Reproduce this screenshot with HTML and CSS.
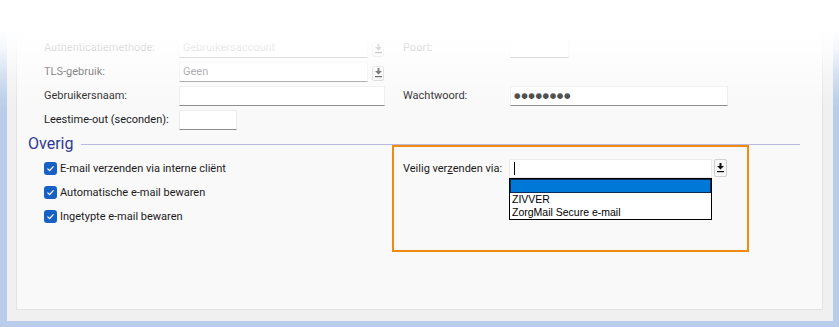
FILE: index.html
```html
<html lang="nl">
<head>
    <meta charset="UTF-8">
    <title>Instellingen e-mail</title>
    <link rel="stylesheet" href="styles.css">
</head>
<body>
    <div class="window">
        <div class="panel">
            <div class="fields">
                <label>Authenticatiemethode:</label>
                <div class="combo">
                    <span class="field dis wide">Gebruikersaccount</span>
                    <span class="drop"><svg width="7" height="10" viewBox="0 0 7 10"><rect x="2.5" y="0" width="2" height="3" fill="#111"/><polygon points="0,3 7,3 3.5,6.5" fill="#111"/><rect x="0" y="8" width="7" height="1.2" fill="#111"/></svg></span>
                </div>
                <span></span>
                <label>Poort:</label>
                <span class="field poort"></span>

                <label>TLS-gebruik:</label>
                <div class="combo">
                    <span class="field dis wide">Geen</span>
                    <span class="drop"><svg width="7" height="10" viewBox="0 0 7 10"><rect x="2.5" y="0" width="2" height="3" fill="#111"/><polygon points="0,3 7,3 3.5,6.5" fill="#111"/><rect x="0" y="8" width="7" height="1.2" fill="#111"/></svg></span>
                </div>
                <span></span>
                <span></span>
                <span></span>

                <label>Gebruikersnaam:</label>
                <span class="field"></span>
                <span></span>
                <label>Wachtwoord:</label>
                <span class="field dots">&#9679;&#9679;&#9679;&#9679;&#9679;&#9679;&#9679;&#9679;</span>

                <label>Leestime-out (seconden):</label>
                <span class="field small"></span>
            </div>

            <div class="legend">
                <span>Overig</span>
                <span class="rule"></span>
            </div>

            <div class="section">
                <div class="checks">
                    <div class="check"><span class="box"><svg width="9" height="9" viewBox="0 0 9 9"><path d="M1.5 4.6 L3.6 6.6 L7.5 2.4" stroke="#fff" stroke-width="1.3" fill="none"/></svg></span>E-mail verzenden via interne cliënt</div>
                    <div class="check"><span class="box"><svg width="9" height="9" viewBox="0 0 9 9"><path d="M1.5 4.6 L3.6 6.6 L7.5 2.4" stroke="#fff" stroke-width="1.3" fill="none"/></svg></span>Automatische e-mail bewaren</div>
                    <div class="check"><span class="box"><svg width="9" height="9" viewBox="0 0 9 9"><path d="M1.5 4.6 L3.6 6.6 L7.5 2.4" stroke="#fff" stroke-width="1.3" fill="none"/></svg></span>Ingetypte e-mail bewaren</div>
                </div>
                <div class="secure">
                    <div class="highlight"></div>
                    <label class="secure-label">Veilig ver<u>z</u>enden via:</label>
                    <div class="select">
                        <span class="input"><span class="caret"></span></span>
                        <span class="drop"><svg width="7" height="10" viewBox="0 0 7 10"><rect x="2.5" y="0" width="2" height="3" fill="#111"/><polygon points="0,3 7,3 3.5,6.5" fill="#111"/><rect x="0" y="8" width="7" height="1.2" fill="#111"/></svg></span>
                        <ul class="list">
                            <li class="sel"></li>
                            <li>ZIVVER</li>
                            <li>ZorgMail Secure e-mail</li>
                        </ul>
                    </div>
                </div>
            </div>
        </div>
    </div>
    <div class="fade"></div>
</body>
</html>
```

FILE: styles.css
```css
body { margin: 0; height: 327px; overflow: hidden; background: #b9cdea; font-family: Roboto, "Liberation Sans", sans-serif; font-size: 11px; color: #1b1b1b; position: relative; }
.window { margin: 0 6px 0 7px; height: 321px; box-sizing: border-box; padding: 0 10px 11px 9px; background: #f0f0f0; }
.panel { height: 100%; box-sizing: border-box; background: #f9f9f9; border: 1px solid #e3e3e3; padding: 37px 11px 0 11px; }

.fields { margin-left: 16px; display: grid; grid-template-columns: 135px 206px 18px 107px 218px; grid-auto-rows: 20px; row-gap: 4px; align-items: center; }
.fields label { line-height: 20px; white-space: nowrap; }
.field { display: block; height: 20px; box-sizing: border-box; background: #fff; border: 1px solid #ececec; border-bottom-color: #8c8c8c; padding-left: 3px; line-height: 18px; }
.field.dis { color: #6e6e6e; }
.field.wide { width: 189px; }
.field.poort { width: 59px; }
.field.small { width: 58px; }
.field.dots { color: #3c3c3c; font-family: "DejaVu Sans", sans-serif; font-size: 7.5px; letter-spacing: 0.6px; padding-left: 3px; }

.combo { display: flex; align-items: center; gap: 4px; }
.drop { width: 13px; height: 18px; box-sizing: border-box; border: 1px solid #d0d0d0; border-radius: 2px; background: #f7f7f7; display: flex; align-items: center; justify-content: center; }
.combo .drop { width: 12px; height: 15px; margin-top: 2px; }

.legend { display: flex; align-items: center; margin-top: 6px; height: 16px; }
.legend span:first-child { font-size: 16px; line-height: 16px; color: #2f3893; }
.rule { flex: 1; height: 1px; background: #b9b9df; margin: 0 11px 0 8px; }

.section { display: flex; margin-top: 6px; }
.checks { margin-left: 16px; width: 359px; display: flex; flex-direction: column; gap: 4px; }
.check { height: 20px; display: flex; align-items: center; gap: 3px; white-space: nowrap; }
.box { width: 13px; height: 13px; border-radius: 3px; background: #1761c4; display: flex; align-items: center; justify-content: center; }

.secure { position: relative; display: flex; align-items: center; height: 20px; }
.secure-label { width: 106px; white-space: nowrap; }
.highlight { position: absolute; left: -11px; top: -13px; width: 357px; height: 107px; box-sizing: border-box; border: 2px solid #f28b12; }
.select { position: relative; display: flex; align-items: center; gap: 2px; }
.input { width: 203px; height: 19px; box-sizing: border-box; background: #fff; border: 1px solid #ececec; display: flex; align-items: center; padding-left: 4px; }
.caret { width: 1px; height: 13px; background: #000; }
.list { position: absolute; left: 0; top: 19.5px; width: 203px; box-sizing: border-box; margin: 0; padding: 0; list-style: none; background: #fff; border: 1px solid #000; font-family: "Liberation Sans", sans-serif; font-size: 10.5px; color: #000; }
.list li { height: 13px; line-height: 13px; padding-left: 2px; }
.list li.sel { height: 14px; background: #0078d7; box-shadow: inset 0 0 0 1px #0a2a55; }

.fade { position: absolute; top: 0; left: 0; right: 0; height: 110px; background: linear-gradient(#fff 0, #fff 30px, rgba(255, 255, 255, 0.85) 48px, rgba(255, 255, 255, 0.45) 72px, rgba(255, 255, 255, 0.1) 96px, rgba(255, 255, 255, 0) 108px); pointer-events: none; }
```
